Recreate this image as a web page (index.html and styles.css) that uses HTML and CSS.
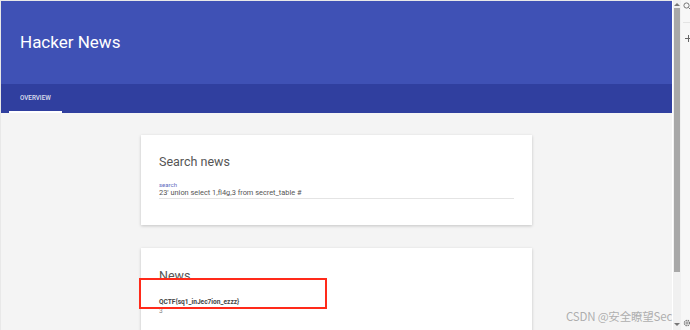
FILE: index.html
```html
<!DOCTYPE html>
<html lang="en">
<head>
  <meta charset="UTF-8" />
  <title>Hacker News</title>
  <link rel="stylesheet" href="styles.css">
</head>
<body>
  <div class="app">
    <div class="page">
      <header class="toolbar">
        <h1>Hacker News</h1>
      </header>
      <nav class="tabs">
        <div class="tab active">OVERVIEW</div>
      </nav>

      <main class="content">
        <section class="card">
          <h2>Search news</h2>
          <label class="field">
            <span class="field-label">search</span>
            <span class="field-input">23' union select 1,fl4g,3 from secret_table #</span>
          </label>
        </section>

        <section class="card news">
          <h2>News</h2>
          <div class="news-item">
            <div class="news-title">QCTF{sq1_inJec7ion_ezzz}</div>
            <div class="news-body">3</div>
          </div>
          <div class="highlight"></div>
        </section>
      </main>
    </div>

    <div class="scrollbar">
      <span class="arrow up"></span>
      <div class="thumb"></div>
      <span class="arrow down"></span>
    </div>

    <aside class="side">
      <svg class="side-icon search" width="8" height="8" viewBox="0 0 8 8"><circle cx="3.5" cy="3.5" r="2.6" fill="none" stroke="#777" stroke-width="1"/><path d="M5.4 5.4 L7.5 7.5" stroke="#777" stroke-width="1"/></svg>
      <div class="side-line"></div>
      <svg class="side-icon plus" width="7" height="7" viewBox="0 0 7 7"><path d="M3.5 0 V7 M0 3.5 H7" stroke="#666" stroke-width="1"/></svg>
      <svg class="side-icon gear" width="8" height="8" viewBox="0 0 8 8"><circle cx="4" cy="4" r="2.6" fill="none" stroke="#777" stroke-width="1.4" stroke-dasharray="1.3 0.8"/><circle cx="4" cy="4" r="1" fill="none" stroke="#777" stroke-width="0.8"/></svg>
    </aside>

    <div class="watermark">CSDN @安全瞭望Sec</div>
  </div>
</body>
</html>
```

FILE: styles.css
```css
body {
  margin: 0;
  font-family: Roboto, "Noto Sans", sans-serif;
  background: #f5f5f5;
  height: 330px;
  overflow: hidden;
}

.app {
  display: flex;
  height: 330px;
  position: relative;
}

.page {
  width: 672px;
  flex-shrink: 0;
  box-sizing: border-box;
  border-left: 1px solid #e8e8e8;
  border-top: 1px solid #e8e8e8;
  background: #f4f4f4;
  overflow: hidden;
}

.toolbar {
  background: #3f51b5;
  height: 83px;
  display: flex;
  align-items: center;
  padding: 0 19px;
}

.toolbar h1 {
  margin: 0;
  color: #fff;
  font-size: 17px;
  font-weight: 400;
  padding-bottom: 1px;
}

.tabs {
  background: #303f9f;
  height: 29px;
  display: flex;
  padding-left: 8px;
}

.tab {
  width: 53px;
  box-sizing: border-box;
  padding-left: 11px;
  padding-top: 10px;
  font-size: 6.3px;
  font-weight: 500;
  color: rgba(255, 255, 255, 0.85);
}

.tab.active {
  border-bottom: 2px solid #fff;
}

.content {
  display: flex;
  flex-direction: column;
  align-items: center;
  gap: 23px;
  padding-top: 22px;
}

.card {
  width: 391px;
  box-sizing: border-box;
  background: #fff;
  box-shadow: 0 1px 3px rgba(0, 0, 0, 0.2);
  padding: 19px 18px 0;
  height: 90px;
  position: relative;
}

.card h2 {
  margin: 0;
  font-size: 12.5px;
  font-weight: 400;
  color: #555;
}

.field {
  display: flex;
  flex-direction: column;
  margin-top: 12px;
  width: 355px;
  border-bottom: 1px solid #e4e4e4;
  padding-bottom: 1px;
}

.field-label {
  font-size: 6px;
  color: #5c6bc0;
  line-height: 7px;
}

.field-input {
  font-size: 7.4px;
  color: #555;
  line-height: 9px;
}

.news {
  height: 100px;
  padding-top: 20px;
}

.news-item {
  margin-top: 15px;
}

.news-title {
  font-size: 6.6px;
  font-weight: 700;
  color: #444;
  line-height: 9px;
}

.news-body {
  font-size: 6.6px;
  color: #888;
  line-height: 9px;
}

.highlight {
  position: absolute;
  left: -2px;
  top: 30px;
  width: 184px;
  height: 27px;
  border: 2px solid #ff2a1a;
}

.scrollbar {
  width: 9px;
  flex-shrink: 0;
  box-sizing: border-box;
  background: #f0f0f0;
  border-left: 1px solid #fff;
  display: flex;
  flex-direction: column;
  align-items: center;
}

.thumb {
  width: 6px;
  height: 264px;
  margin-top: 2px;
  background: #a8a8a8;
}

.arrow {
  width: 0;
  height: 0;
  border-left: 3px solid transparent;
  border-right: 3px solid transparent;
}

.arrow.up {
  margin-top: 3px;
  border-bottom: 3px solid #777;
}

.arrow.down {
  margin-top: auto;
  margin-bottom: 4px;
  border-top: 3px solid #777;
}

.side {
  width: 9px;
  flex-shrink: 0;
  box-sizing: border-box;
  background: #f7f7f7;
  display: flex;
  flex-direction: column;
  align-items: flex-start;
  padding-left: 2px;
  overflow: hidden;
}

.side-icon.search {
  margin-top: 2px;
}

.side-line {
  width: 8px;
  height: 1px;
  background: #e4e4e4;
  margin-top: 12px;
}

.side-icon.plus {
  margin-top: 12px;
  margin-left: 2px;
}

.side-icon.gear {
  margin-top: auto;
  margin-bottom: 3px;
}

.watermark {
  position: absolute;
  left: 566px;
  top: 308px;
  font-size: 11.5px;
  color: rgba(150, 150, 150, 0.75);
  font-family: "Noto Sans CJK SC", sans-serif;
  white-space: nowrap;
  letter-spacing: -0.2px;
}
```
